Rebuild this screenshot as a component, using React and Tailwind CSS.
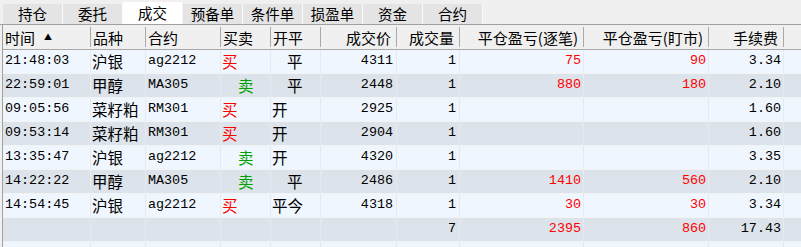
import React from "react";

const tabs = ["持仓", "委托", "成交", "预备单", "条件单", "损盈单", "资金", "合约"];

const cols = "grid grid-cols-[88px_55px_75px_50px_50px_76px_63px_124px_125px_75px_1fr]";

const rows = [
  ["21:48:03", "沪银", "ag2212", "买", "平", "4311", "1", "75", "90", "3.34"],
  ["22:59:01", "甲醇", "MA305", "卖", "平", "2448", "1", "880", "180", "2.10"],
  ["09:05:56", "菜籽粕", "RM301", "买", "开", "2925", "1", "", "", "1.60"],
  ["09:53:14", "菜籽粕", "RM301", "买", "开", "2904", "1", "", "", "1.60"],
  ["13:35:47", "沪银", "ag2212", "卖", "开", "4320", "1", "", "", "3.35"],
  ["14:22:22", "甲醇", "MA305", "卖", "平", "2486", "1", "1410", "560", "2.10"],
  ["14:54:45", "沪银", "ag2212", "买", "平今", "4318", "1", "30", "30", "3.34"],
  ["", "", "", "", "", "", "7", "2395", "860", "17.43"],
  ["", "", "", "", "", "", "", "", "", ""],
];

const headers = [
  { t: "时间", align: "left", arrow: true },
  { t: "品种", align: "left" },
  { t: "合约", align: "left" },
  { t: "买卖", align: "left" },
  { t: "开平", align: "left" },
  { t: "成交价", align: "right" },
  { t: "成交量", align: "right" },
  { t: "平仓盈亏(逐笔)", align: "right" },
  { t: "平仓盈亏(盯市)", align: "right" },
  { t: "手续费", align: "right" },
];

const mono = "font-['Liberation_Mono',monospace] text-[13.4px]";
const cjk = "font-['Noto_Sans_CJK_SC',sans-serif] text-[15.5px]";

function Cell({ children, className = "" }) {
  return (
    <div className={"h-full flex items-center border-r border-[#e6e9ee] overflow-hidden whitespace-nowrap " + className}>
      {children}
    </div>
  );
}

export default function App() {
  return (
    <div className="w-[801px] h-[247px] bg-[#f0f0f0] overflow-hidden font-['Noto_Sans_CJK_SC',sans-serif] text-black">
      {/* Tab bar */}
      <div className="flex items-end h-[25px] border-b border-[#a0a0a0] pl-[3px]">
        {tabs.map((t) =>
          t === "成交" ? (
            <div key={t} className="w-[60px] h-[22px] bg-white flex items-center justify-center text-[14.5px] leading-none border-r border-[#f4f4f4]">
              {t}
            </div>
          ) : (
            <div key={t} className="w-[60px] h-[20px] bg-[#e4e4e4] flex items-center justify-center text-[14.5px] leading-none border-r border-[#fafafa]">
              {t}
            </div>
          )
        )}
      </div>

      {/* Table */}
      <div className="ml-[2px] border-l border-[#a0a0a0]">
        {/* header */}
        <div className={cols + " h-[25px] bg-[#f0f0f0] border-b border-[#a8a8a8]"}>
          {headers.map((h, i) => (
            <div key={i} className="h-full flex items-center">
              <div className={"flex-1 flex items-center text-[15px] leading-none whitespace-nowrap " + (h.align === "right" ? "justify-end pr-[5px]" : "pl-[2px]")}>
                {h.t}
                {h.arrow && <span className="ml-[9px] text-[8px] leading-none">▲</span>}
              </div>
              <div className="w-px h-[20px] bg-[#a9a9a9]" />
            </div>
          ))}
          <div />
        </div>
        {/* rows */}
        {rows.map((r, ri) => (
          <div key={ri} className={cols + " h-[24px] border-b border-[#f2f3f5] " + (ri % 2 === 0 ? "bg-[#f0f6fe]" : "bg-[#dde3ea]")}>
            <Cell className={mono + " pl-[2px]"}>{r[0]}</Cell>
            <Cell className={cjk + " pl-[1px]"}>{r[1]}</Cell>
            <Cell className={mono + " pl-[2px]"}>{r[2]}</Cell>
            <Cell className={cjk + (r[3] === "卖" ? " pl-[17px] text-[#00a000]" : " pl-[1px] text-[#ff0000]")}>{r[3]}</Cell>
            <Cell className={cjk + (r[4] === "平" ? " pl-[16px]" : " pl-[1px]")}>{r[4]}</Cell>
            <Cell className={mono + " justify-end pr-[3px]"}>{r[5]}</Cell>
            <Cell className={mono + " justify-end pr-[3px]"}>{r[6]}</Cell>
            <Cell className={mono + " justify-end pr-[2px] text-[#ff0000]"}>{r[7]}</Cell>
            <Cell className={mono + " justify-end pr-[2px] text-[#ff0000]"}>{r[8]}</Cell>
            <Cell className={mono + " justify-end pr-[2px]"}>{r[9]}</Cell>
            <div />
          </div>
        ))}
      </div>
    </div>
  );
}
